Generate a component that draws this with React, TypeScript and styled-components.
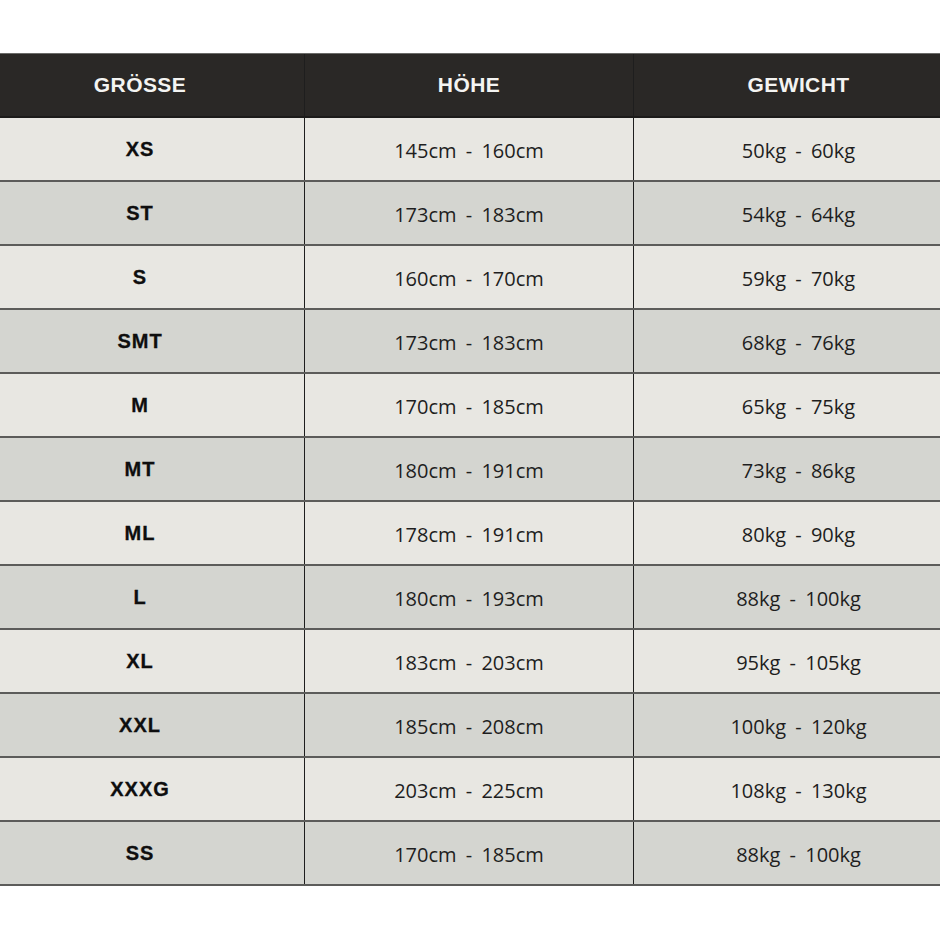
import React from 'react';
import styled, { createGlobalStyle } from 'styled-components';

interface ISizeRow {
  size: string;
  height: string;
  weight: string;
}

const rows: ISizeRow[] = [
  { size: 'XS', height: '145cm - 160cm', weight: '50kg - 60kg' },
  { size: 'ST', height: '173cm - 183cm', weight: '54kg - 64kg' },
  { size: 'S', height: '160cm - 170cm', weight: '59kg - 70kg' },
  { size: 'SMT', height: '173cm - 183cm', weight: '68kg - 76kg' },
  { size: 'M', height: '170cm - 185cm', weight: '65kg - 75kg' },
  { size: 'MT', height: '180cm - 191cm', weight: '73kg - 86kg' },
  { size: 'ML', height: '178cm - 191cm', weight: '80kg - 90kg' },
  { size: 'L', height: '180cm - 193cm', weight: '88kg - 100kg' },
  { size: 'XL', height: '183cm - 203cm', weight: '95kg - 105kg' },
  { size: 'XXL', height: '185cm - 208cm', weight: '100kg - 120kg' },
  { size: 'XXXG', height: '203cm - 225cm', weight: '108kg - 130kg' },
  { size: 'SS', height: '170cm - 185cm', weight: '88kg - 100kg' },
];

const GlobalStyle = createGlobalStyle`
  html, body {
    margin: 0;
    padding: 0;
    background: #ffffff;
  }
  * {
    box-sizing: border-box;
  }
`;

const Page = styled.div`
  width: 940px;
  height: 940px;
  padding-top: 53px;
  background: #ffffff;
  overflow: hidden;
`;

/* the table is wider than the viewport and cropped on both sides */
const Table = styled.div`
  display: flex;
  flex-direction: column;
  width: 987px;
  margin-left: -24px;
`;

const Row = styled.div<{ $shade: 'head' | 'light' | 'dark' }>`
  display: grid;
  grid-template-columns: 329px 329px 329px;
  height: ${({ $shade }) => ($shade === 'head' ? '65px' : '64px')};
  border-bottom: 2px solid ${({ $shade }) => ($shade === 'head' ? '#1c1b1a' : '#5c5c5a')};
  border-top: ${({ $shade }) => ($shade === 'head' ? '1px solid #6a6a68' : 'none')};
  background: ${({ $shade }) =>
    $shade === 'head' ? '#2a2826' : $shade === 'light' ? '#e8e7e2' : '#d4d5d0'};
`;

const Cell = styled.div<{ $last?: boolean }>`
  display: flex;
  align-items: center;
  justify-content: center;
  border-right: ${({ $last }) => ($last ? 'none' : '1px solid #1e1e1e')};
`;

const HeadText = styled.span`
  font-family: 'Liberation Sans', Arial, sans-serif;
  font-weight: 700;
  font-size: 21px;
  letter-spacing: 0.4px;
  color: #f4f4f2;
`;

const SizeText = styled.span`
  font-family: 'Liberation Sans', Arial, sans-serif;
  font-weight: 700;
  font-size: 20px;
  letter-spacing: 1px;
  color: #0e0e0e;
  margin-top: 1px;
  -webkit-text-stroke: 0.3px #0e0e0e;
`;

const ValueText = styled.span`
  font-family: 'Open Sans', 'Noto Sans', sans-serif;
  font-size: 20px;
  word-spacing: 4px;
  color: #1e1e1e;
  margin-top: 3px;
`;

const App: React.FC = () => {
  return (
    <Page>
      <GlobalStyle />
      <Table>
        <Row $shade="head">
          <Cell>
            <HeadText>GRÖSSE</HeadText>
          </Cell>
          <Cell>
            <HeadText>HÖHE</HeadText>
          </Cell>
          <Cell $last>
            <HeadText>GEWICHT</HeadText>
          </Cell>
        </Row>
        {rows.map((row, i) => (
          <Row key={row.size} $shade={i % 2 === 0 ? 'light' : 'dark'}>
            <Cell>
              <SizeText>{row.size}</SizeText>
            </Cell>
            <Cell>
              <ValueText>{row.height}</ValueText>
            </Cell>
            <Cell $last>
              <ValueText>{row.weight}</ValueText>
            </Cell>
          </Row>
        ))}
      </Table>
    </Page>
  );
};

export default App;
